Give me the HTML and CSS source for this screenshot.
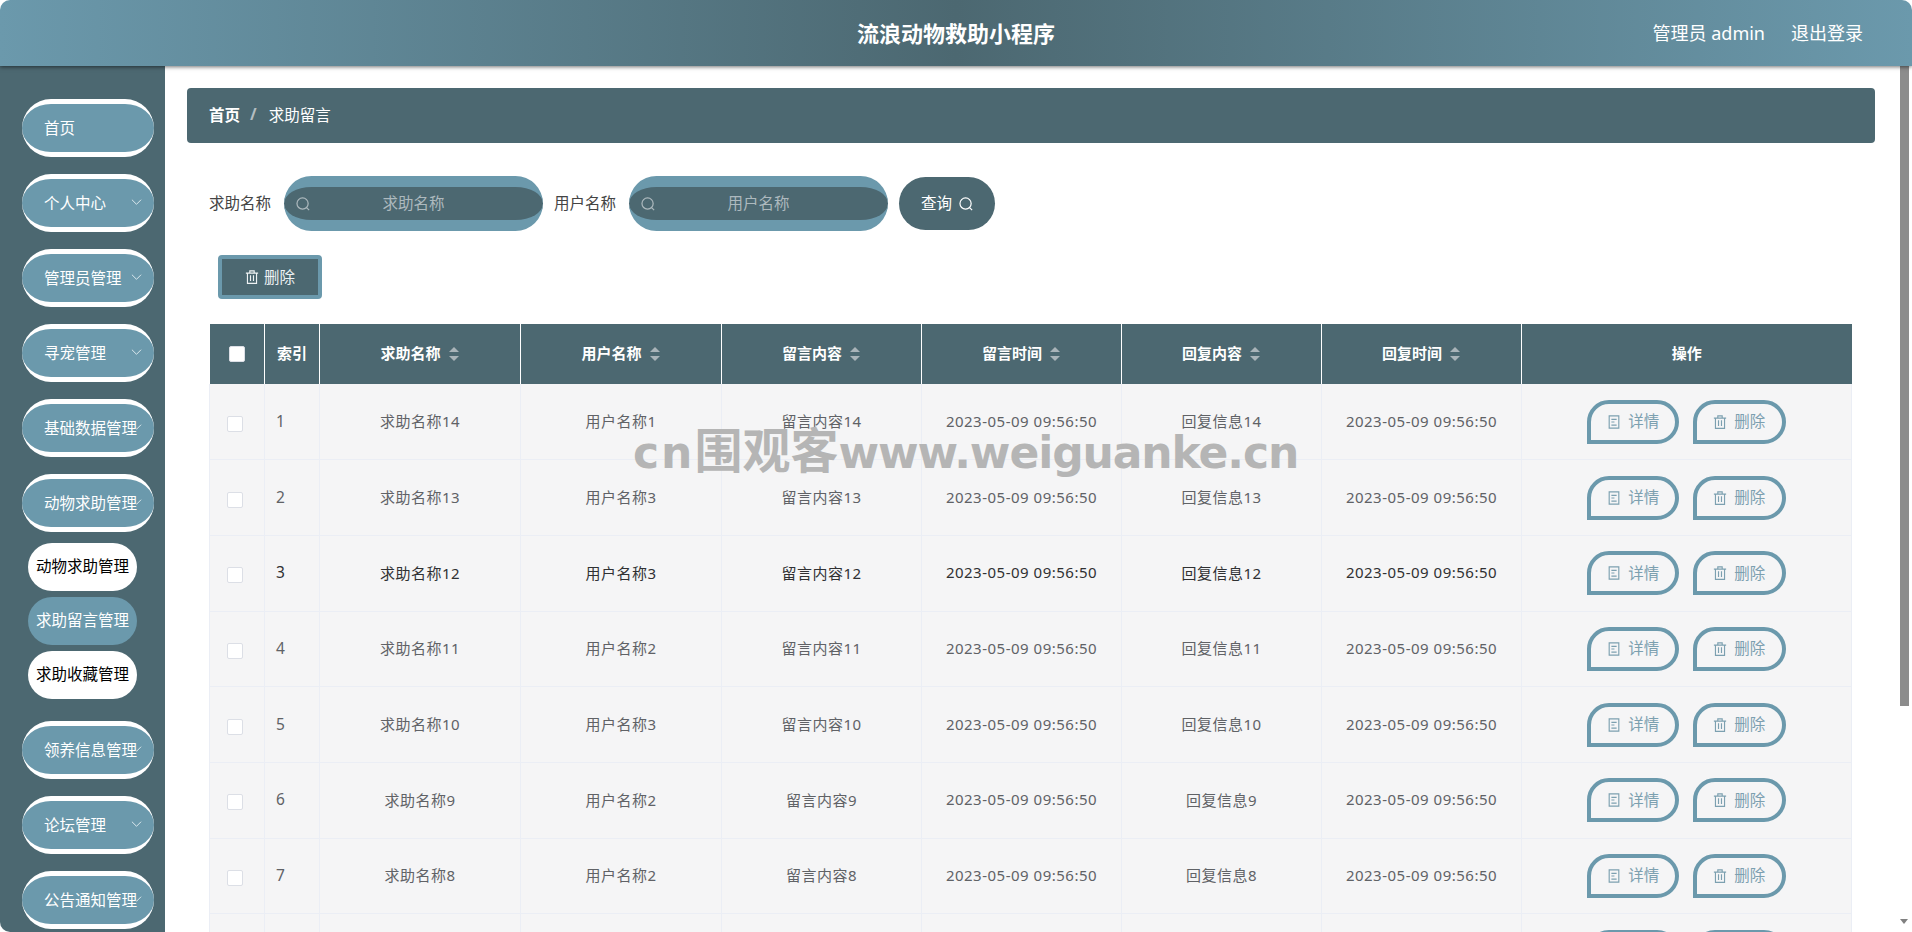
FILE: index.html
```html
<!DOCTYPE html>
<html lang="zh-CN">
<head>
    <meta charset="UTF-8">
    <title>流浪动物救助小程序</title>
    <link rel="stylesheet" href="styles.css">
</head>
<body>
    <svg class="sprites" width="0" height="0">
        <symbol id="i-search" viewBox="0 0 16 16"><circle cx="7.5" cy="7.5" r="6.4" fill="none" stroke="currentColor" stroke-width="1.4"/><path d="M11.8 11.8 15 15" fill="none" stroke="currentColor" stroke-width="1.4"/></symbol>
        <symbol id="i-trash" viewBox="0 0 16 16"><path d="M1 3.5h14M5.5 3.5V1h5v2.5M2.8 3.5v11.8h10.4V3.5M6.3 6v6.5M9.7 6v6.5" fill="none" stroke="currentColor" stroke-width="1.3"/></symbol>
        <symbol id="i-doc" viewBox="0 0 16 16"><path d="M2.5 1h11v14h-11zM5 5h6M5 8h3.5M5 11.5h6" fill="none" stroke="currentColor" stroke-width="1.3"/></symbol>
        <symbol id="i-down" viewBox="0 0 12 8"><path d="M1 1.5 6 6.5 11 1.5" fill="none" stroke="currentColor" stroke-width="1"/></symbol>
    </svg>

    <div class="app">
        <header class="topbar">
            <div class="topbar-title">流浪动物救助小程序</div>
            <div class="topbar-user">
                <span>管理员 admin</span>
                <span>退出登录</span>
            </div>
        </header>

        <div class="layout">
            <aside class="sidebar">
                <div class="menu-item">首页</div>
                <div class="menu-item">个人中心<svg class="arrow"><use href="#i-down"/></svg></div>
                <div class="menu-item">管理员管理<svg class="arrow"><use href="#i-down"/></svg></div>
                <div class="menu-item">寻宠管理<svg class="arrow"><use href="#i-down"/></svg></div>
                <div class="menu-item long">基础数据管理<svg class="arrow"><use href="#i-down"/></svg></div>
                <div class="menu-item long">动物求助管理<svg class="arrow"><use href="#i-down"/></svg></div>
                <div class="submenu">
                    <div class="submenu-item">动物求助管理</div>
                    <div class="submenu-item active">求助留言管理</div>
                    <div class="submenu-item">求助收藏管理</div>
                </div>
                <div class="menu-item long">领养信息管理<svg class="arrow"><use href="#i-down"/></svg></div>
                <div class="menu-item">论坛管理<svg class="arrow"><use href="#i-down"/></svg></div>
                <div class="menu-item long">公告通知管理<svg class="arrow"><use href="#i-down"/></svg></div>
            </aside>

            <main class="content">
                <div class="breadcrumb">
                    <b>首页</b>
                    <span class="sep">/</span>
                    <span>求助留言</span>
                </div>

                <div class="search-row">
                    <label>求助名称</label>
                    <div class="search-input"><svg class="icon"><use href="#i-search"/></svg><span>求助名称</span></div>
                    <label>用户名称</label>
                    <div class="search-input"><svg class="icon"><use href="#i-search"/></svg><span>用户名称</span></div>
                    <button class="query-btn">查询<svg class="icon"><use href="#i-search"/></svg></button>
                </div>

                <button class="delete-btn"><svg class="icon"><use href="#i-trash"/></svg>删除</button>

                <table class="data-table">
                    <thead>
                        <tr>
                            <th class="col-check"><span class="check"></span></th>
                            <th class="col-index">索引</th>
                            <th class="col-wide">求助名称<i class="sort"></i></th>
                            <th class="col-wide">用户名称<i class="sort"></i></th>
                            <th class="col-mid">留言内容<i class="sort"></i></th>
                            <th class="col-mid">留言时间<i class="sort"></i></th>
                            <th class="col-mid">回复内容<i class="sort"></i></th>
                            <th class="col-mid">回复时间<i class="sort"></i></th>
                            <th>操作</th>
                        </tr>
                    </thead>
                    <tbody id="rows"></tbody>
                </table>
            </main>
        </div>

        <div class="scrollbar"><div class="scrollbar-thumb"></div><div class="scrollbar-down"></div></div>
    </div>

    <div class="watermark"><span class="wm-cn">cn</span><span class="wm-cjk">围观客</span>www.weiguanke.cn</div>

    <script>
        const data = [
            [1, 14, 1], [2, 13, 3], [3, 12, 3], [4, 11, 2],
            [5, 10, 3], [6, 9, 2], [7, 8, 2], [8, 7, 1]
        ];
        const rows = document.getElementById('rows');

        data.forEach(([idx, n, user]) => {
            const tr = document.createElement('tr');
            if (idx === 3) tr.className = 'hover';
            tr.innerHTML = `
                <td class="cell-check"><span class="check"></span></td>
                <td class="cell-index">${idx}</td>
                <td>求助名称${n}</td>
                <td>用户名称${user}</td>
                <td>留言内容${n}</td>
                <td>2023-05-09 09:56:50</td>
                <td>回复信息${n}</td>
                <td>2023-05-09 09:56:50</td>
                <td class="cell-actions">
                    <button class="row-btn"><svg class="icon"><use href="#i-doc"/></svg>详情</button>
                    <button class="row-btn"><svg class="icon"><use href="#i-trash"/></svg>删除</button>
                </td>`;
            rows.appendChild(tr);
        });
    </script>
</body>
</html>
```

FILE: styles.css
```css
* {
    box-sizing: border-box;
}

html, body {
    margin: 0;
    height: 100%;
    overflow: hidden;
    background: #fff;
}

body {
    font-family: "Noto Sans", "Noto Sans CJK SC", sans-serif;
    font-size: 15px;
    color: #606266;
}

.sprites {
    position: absolute;
}

.app {
    height: 932px;
    display: flex;
    flex-direction: column;
    border-radius: 10px;
    overflow: hidden;
    position: relative;
}

.topbar {
    height: 66px;
    flex: none;
    position: relative;
    z-index: 2;
    display: flex;
    align-items: center;
    justify-content: center;
    padding-bottom: 3px;
    color: #fff;
    background: linear-gradient(90deg, #6b99ac 0%, #4c6871 50%, #6b99ac 100%);
    box-shadow: 0 1px 4px rgba(0, 0, 0, 0.55);
}

.topbar-title {
    font-size: 22px;
    font-weight: 700;
}

.topbar-user {
    position: absolute;
    right: 49px;
    top: 0;
    height: 63px;
    display: flex;
    align-items: center;
    gap: 26px;
    font-size: 18px;
}

.layout {
    flex: 1;
    display: flex;
    min-height: 0;
}

.sidebar {
    width: 165px;
    flex: none;
    background: #4c6871;
    padding: 33px 11px 0 22px;
}

.menu-item {
    height: 58px;
    width: 132px;
    margin-bottom: 17px;
    padding: 0 0 2px 22px;
    display: flex;
    align-items: center;
    position: relative;
    color: #fff;
    font-size: 15.5px;
    white-space: nowrap;
    background: #6b99ac;
    border-radius: 29px;
    border-top: 5px solid #fff;
    border-bottom: 5px solid #fff;
}

.arrow {
    position: absolute;
    right: 12px;
    top: 19px;
    width: 11px;
    height: 8px;
    color: #e4eef2;
}

/* the long labels run over the left half of the arrow */
.menu-item.long .arrow {
    clip-path: inset(0 0 0 5px);
}

.submenu {
    margin: -6px 0 22px 6px;
    width: 109px;
    display: flex;
    flex-direction: column;
    gap: 6px;
}

.submenu-item {
    height: 48px;
    line-height: 46px;
    text-align: center;
    font-size: 15.5px;
    color: #000;
    background: #fff;
    border-radius: 24px;
    white-space: nowrap;
}

.submenu-item.active {
    color: #fff;
    background: #6b99ac;
}

.content {
    flex: 1;
    min-width: 0;
    padding: 22px 37px 0 22px;
}

.breadcrumb {
    height: 55px;
    display: flex;
    align-items: center;
    padding: 0 22px 3px;
    gap: 10px;
    color: #fff;
    font-size: 15.5px;
    background: #4c6871;
    border-radius: 4px;
}

.breadcrumb .sep {
    color: #b4bdc1;
    font-weight: 700;
    font-size: 16px;
    margin-right: 2px;
}

.search-row {
    display: flex;
    align-items: center;
    margin: 33px 0 0 22px;
    height: 55px;
    font-size: 15.5px;
}

.search-row label {
    color: #444;
    width: 75px;
    padding-bottom: 2px;
}

.search-input {
    width: 259px;
    height: 55px;
    margin-right: 11px;
    position: relative;
    display: flex;
    align-items: center;
    justify-content: center;
    padding-bottom: 2px;
    color: #adb9be;
    font-size: 15.5px;
    background: #4c6871;
    border-top: 11px solid #6b99ac;
    border-bottom: 11px solid #6b99ac;
    border-radius: 27.5px;
}

.search-input .icon {
    position: absolute;
    left: 12px;
    top: 10px;
    width: 14px;
    height: 14px;
}

.query-btn {
    width: 96px;
    height: 53px;
    border: 0;
    padding: 0 0 2px;
    display: inline-flex;
    align-items: center;
    justify-content: center;
    gap: 7px;
    font: inherit;
    font-size: 15.5px;
    color: #fff;
    background: #4c6871;
    border-radius: 27px;
}

.icon {
    width: 15px;
    height: 15px;
}

.query-btn .icon {
    width: 14px;
    height: 14px;
    margin-top: 2px;
}

.delete-btn {
    display: flex;
    align-items: center;
    justify-content: center;
    gap: 5px;
    width: 104px;
    height: 44px;
    margin: 24px 0 25px 31px;
    padding: 0 0 2px;
    font: inherit;
    font-size: 15.5px;
    color: #eef2f4;
    background: #4c6871;
    border: 4px solid #6b99ac;
    border-radius: 4px;
}

.delete-btn .icon {
    width: 14px;
    height: 14px;
    margin-top: 2px;
}

.data-table {
    width: 1643px;
    margin-left: 22px;
    border-collapse: collapse;
    table-layout: fixed;
    font-size: 15px;
}

.data-table th {
    height: 60px;
    padding: 0 0 3px;
    color: #fff;
    font-size: 15px;
    font-weight: 700;
    background: #4c6871;
    border-right: 1px solid #fff;
    border-bottom: 0;
}

.data-table th:last-child {
    border-right: 0;
}

.col-check,
.col-index {
    width: 55px;
}

.col-wide {
    width: 201px;
}

.col-mid {
    width: 200px;
}

.data-table td {
    height: 75.7px;
    padding: 0 0 2px;
    text-align: center;
    background: #f5f5f6;
    border-right: 1px solid #ebeef5;
    border-bottom: 1px solid #ebeef5;
    letter-spacing: 0.5px;
}

.data-table td:first-child {
    border-left: 1px solid #ebeef5;
}

.data-table td.cell-check {
    padding: 0 5px 0 0;
}

.data-table td.cell-index {
    text-align: left;
    padding-left: 11px;
    font-size: 15.5px;
}

.data-table td.cell-actions {
    padding: 0;
}

.data-table tr.hover td {
    color: #303133;
}

.check {
    display: inline-block;
    width: 16px;
    height: 16px;
    vertical-align: middle;
    background: #fff;
    border: 1px solid #dcdfe6;
    border-radius: 2px;
}

.sort {
    display: inline-block;
    position: relative;
    width: 11px;
    height: 14px;
    margin-left: 8px;
    vertical-align: -2px;
}

.sort::before,
.sort::after {
    content: "";
    position: absolute;
    left: 0;
    border-left: 5.5px solid transparent;
    border-right: 5.5px solid transparent;
}

.sort::before {
    top: 0;
    border-bottom: 5px solid #a9b4b9;
}

.sort::after {
    bottom: 0;
    border-top: 5px solid #a9b4b9;
}

.row-btn {
    display: inline-flex;
    align-items: center;
    justify-content: center;
    gap: 7px;
    width: 93px;
    height: 44px;
    margin: 0 0 0 5px;
    padding: 0 0 2px;
    font: inherit;
    font-size: 15.5px;
    letter-spacing: 0;
    color: #7ca0b0;
    background: transparent;
    border: 4px solid #6b99ac;
    border-radius: 22px 22px 22px 0;
    vertical-align: middle;
}

.row-btn:first-child {
    width: 92px;
    margin: 0 4px 0 0;
}

.row-btn .icon {
    width: 14px;
    height: 14px;
    margin-top: 2px;
}

.scrollbar {
    position: absolute;
    right: 0;
    top: 66px;
    bottom: 0;
    width: 20px;
    background: #fff;
    z-index: 1;
}

.scrollbar-thumb {
    position: absolute;
    left: 8px;
    top: 0;
    width: 9px;
    height: 640px;
    background: #8c8c8c;
}

.scrollbar-down {
    position: absolute;
    left: 8px;
    top: 853px;
    border-left: 4px solid transparent;
    border-right: 4px solid transparent;
    border-top: 5px solid #808080;
}

.watermark {
    position: absolute;
    left: 633px;
    top: 416px;
    font-family: "DejaVu Sans", "Noto Sans CJK SC", sans-serif;
    font-size: 44px;
    font-weight: 700;
    line-height: 70px;
    letter-spacing: -1.1px;
    color: #b5b5b5;
    white-space: nowrap;
    pointer-events: none;
}

.wm-cn {
    letter-spacing: 2px;
}

.wm-cjk {
    font-size: 48px;
    letter-spacing: 0;
}
```
